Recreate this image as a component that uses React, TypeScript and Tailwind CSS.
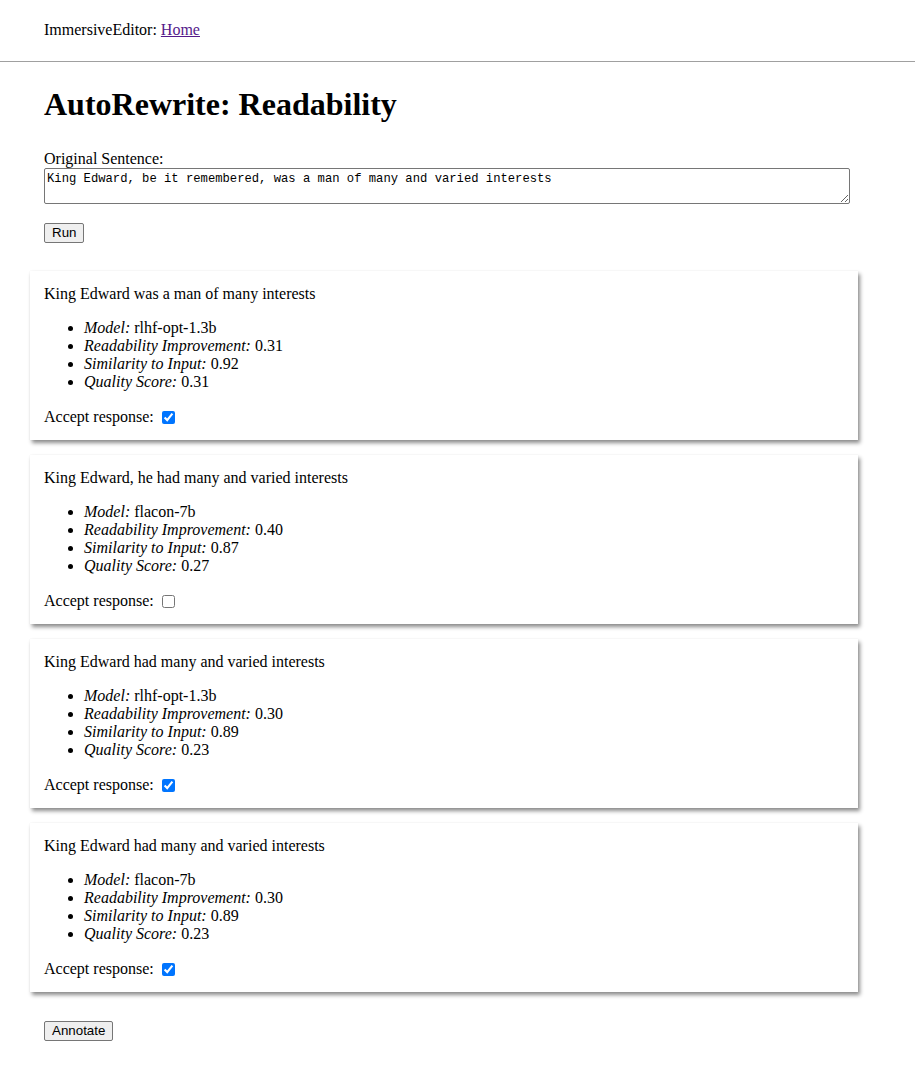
import React from "react";

type Result = {
  text: string;
  model: string;
  readability: string;
  similarity: string;
  quality: string;
  accepted: boolean;
};

const results: Result[] = [
  { text: "King Edward was a man of many interests", model: "rlhf-opt-1.3b", readability: "0.31", similarity: "0.92", quality: "0.31", accepted: true },
  { text: "King Edward, he had many and varied interests", model: "flacon-7b", readability: "0.40", similarity: "0.87", quality: "0.27", accepted: false },
  { text: "King Edward had many and varied interests", model: "rlhf-opt-1.3b", readability: "0.30", similarity: "0.89", quality: "0.23", accepted: true },
  { text: "King Edward had many and varied interests", model: "flacon-7b", readability: "0.30", similarity: "0.89", quality: "0.23", accepted: true },
];

function NativeButton({ children }: { children: React.ReactNode }) {
  return (
    <button className="h-[20px] px-[7px] border border-[#767676] bg-[#efefef] rounded-[2px] text-[13.33px] leading-[16px] text-black font-['Liberation_Sans',Arial,sans-serif]">
      {children}
    </button>
  );
}

function ResultCard({ r }: { r: Result }) {
  return (
    <div className="w-[828px] bg-white p-[14px] shadow-[2px_3px_4px_rgba(0,0,0,0.45),0_0_1px_rgba(0,0,0,0.08)]">
      <p className="leading-[18px]">{r.text}</p>
      <ul className="list-disc pl-10 mt-4 leading-[18px]">
        <li>
          <i>Model:</i> {r.model}
        </li>
        <li>
          <i>Readability Improvement:</i> {r.readability}
        </li>
        <li>
          <i>Similarity to Input:</i> {r.similarity}
        </li>
        <li>
          <i>Quality Score:</i> {r.quality}
        </li>
      </ul>
      <div className="mt-[17px] flex items-center leading-[18px]">
        <span>Accept response:</span>
        <input
          type="checkbox"
          defaultChecked={r.accepted}
          className="ml-[8px] w-[13px] h-[13px] accent-[#0075ff]"
        />
      </div>
    </div>
  );
}

export default function App() {
  return (
    <div className="min-h-screen bg-white text-black text-[16px] font-['Liberation_Serif','Times_New_Roman',serif]">
      <div className="pt-[21px] pb-[22px] px-[44px] leading-[18px]">
        ImmersiveEditor:{" "}
        <a href="#" className="text-[#551a8b] underline">
          Home
        </a>
      </div>
      <hr className="border-0 border-t border-[#a0a0a0]" />

      <div className="px-[30px] pb-10">
        <div className="px-[14px]">
          <h1 className="mt-[24px] text-[32px] font-bold leading-[37px]">AutoRewrite: Readability</h1>
          <div className="mt-[27px] leading-[18px]">Original Sentence:</div>
          <textarea
            defaultValue="King Edward, be it remembered, was a man of many and varied interests"
            className="block w-[806px] h-[36px] p-[2px] border border-[#767676] rounded-[2px] text-[12.2px] leading-[16px] font-['Liberation_Mono','DejaVu_Sans_Mono',monospace]"
          />
          <div className="mt-[19px] flex">
            <NativeButton>Run</NativeButton>
          </div>
        </div>

        <div className="mt-[28px] flex flex-col gap-[15px]">
          {results.map((r, i) => (
            <ResultCard key={i} r={r} />
          ))}
        </div>

        <div className="px-[14px] mt-[29px] flex">
          <NativeButton>Annotate</NativeButton>
        </div>
      </div>
    </div>
  );
}
